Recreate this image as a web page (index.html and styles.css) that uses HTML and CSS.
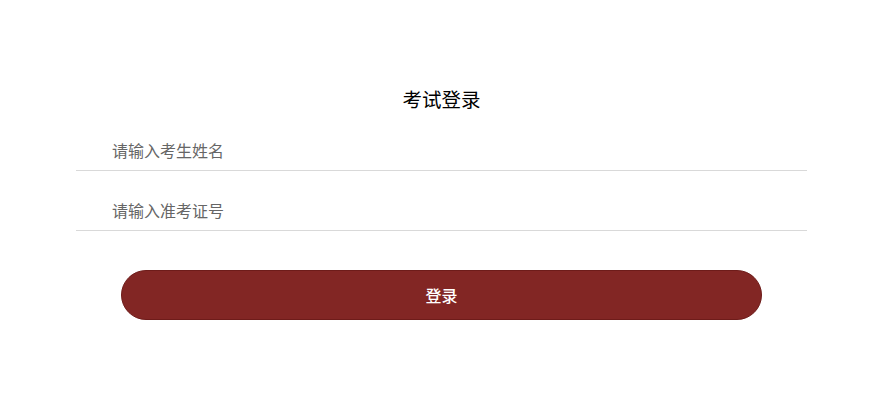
FILE: index.html
```html
<!DOCTYPE html>
<html lang="zh">
<head>
<meta charset="utf-8">
<link rel="stylesheet" href="styles.css">
</head>
<body>
<div class="page">
  <h1 class="title">考试登录</h1>
  <div class="field"><input class="input" type="text" placeholder="请输入考生姓名"></div>
  <div class="field"><input class="input" type="text" placeholder="请输入准考证号"></div>
  <button class="btn" type="button">登录</button>
</div>
</body>
</html>
```
FILE: styles.css
```css
html, body {
  margin: 0;
  padding: 0;
  background: #fff;
  font-family: "Noto Sans CJK SC", "Noto Sans", sans-serif;
}
.page {
  width: 731px;
  margin: 0 auto;
  padding-top: 84px;
  display: flex;
  flex-direction: column;
  align-items: center;
}
.title {
  margin: 0;
  font-size: 19.5px;
  line-height: 30px;
  font-weight: 400;
  color: #000;
}
.field {
  width: 100%;
  margin-top: 16px;
  border-bottom: 1px solid #d9d9d9;
}
.field + .field {
  margin-top: 19px;
}
.input {
  display: block;
  width: 100%;
  box-sizing: border-box;
  height: 40px;
  border: 0;
  outline: none;
  padding: 0 0 0 36px;
  font-family: inherit;
  font-size: 16px;
  color: #333;
  background: transparent;
}
.input::placeholder {
  color: #666;
}
.btn {
  margin-top: 39px;
  width: 641px;
  height: 50px;
  border-radius: 25px;
  border: 1px solid #6e1c1a;
  background: #822624;
  color: #fff;
  font-family: inherit;
  font-size: 16px;
  font-weight: 500;
}
```
